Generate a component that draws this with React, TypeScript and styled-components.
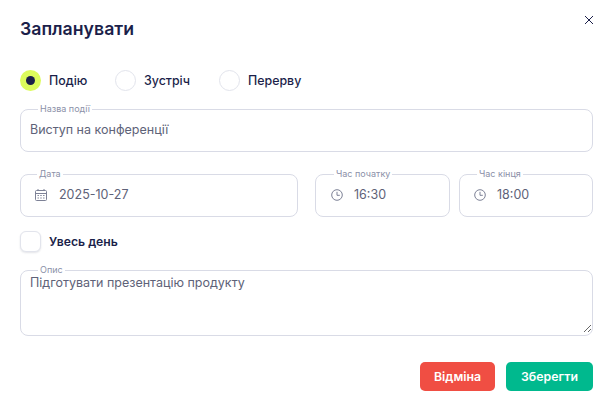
import React from "react";
import styled, { createGlobalStyle } from "styled-components";

const Global = createGlobalStyle`
  html, body { margin: 0; padding: 0; background: #fff; }
  body { font-family: Inter, "Noto Sans", sans-serif; color: #1b1f4a; }
  * { box-sizing: border-box; }
`;

const Dialog = styled.div`
  position: relative;
  width: 612px;
  height: 410px;
  padding: 19px 19px 0 20px;
  background: #fff;
`;

const Title = styled.h2`
  margin: 0;
  height: 20px;
  font-size: 17.7px;
  line-height: 20px;
  font-weight: 600;
  color: #1b1f4a;
`;

const Close = styled.button`
  position: absolute;
  top: 14px;
  right: 17px;
  width: 12px;
  height: 12px;
  padding: 0;
  border: 0;
  background: none;
  display: flex;
  color: #1b1f4a;
`;

const RadioRow = styled.div`
  display: flex;
  align-items: center;
  margin-top: 31px;
  height: 21px;
`;

const RadioItem = styled.label<{ $width: number }>`
  display: flex;
  align-items: center;
  gap: 8px;
  width: ${(p) => p.$width}px;
  font-size: 12.4px;
  font-weight: 500;
  color: #1b1f4a;
`;

const RadioCircle = styled.span<{ $checked?: boolean }>`
  width: 21px;
  height: 21px;
  border-radius: 50%;
  flex: none;
  display: flex;
  align-items: center;
  justify-content: center;
  border: ${(p) => (p.$checked ? "0" : "1px solid #e2e4ec")};
  background: ${(p) => (p.$checked ? "#dcfb5c" : "#fff")};
`;

const RadioDot = styled.span`
  width: 9px;
  height: 9px;
  border-radius: 50%;
  background: #1b1f4a;
`;

const Field = styled.fieldset<{ $height?: number; $flex?: string; $pad?: number; $gap?: number; $bottom?: number }>`
  margin: 0;
  padding: 0 9px ${(p) => p.$bottom ?? 6}px ${(p) => p.$pad ?? 9}px;
  min-width: 0;
  height: ${(p) => p.$height ?? 48}px;
  flex: ${(p) => p.$flex ?? "none"};
  border: 1px solid #d9dbe6;
  border-radius: 8px;
  display: flex;
  align-items: center;
  gap: ${(p) => p.$gap ?? 12}px;
`;

const Legend = styled.legend<{ $inset?: number }>`
  margin-left: ${(p) => p.$inset ?? 8}px;
  padding: 0 2px;
  font-size: 9px;
  line-height: 10px;
  height: 10px;
  color: #8b90a8;
  white-space: nowrap;
`;

const FieldValue = styled.span`
  font-size: 12.5px;
  line-height: 20px;
  color: #5e6278;
  white-space: nowrap;
`;

const NameBlock = styled.div`
  margin-top: 13px;
`;

const DateRow = styled.div`
  display: flex;
  margin-top: 17px;
`;

const DateSpacer = styled.div<{ $w: number }>`
  width: ${(p) => p.$w}px;
  flex: none;
`;

const CheckRow = styled.label`
  display: flex;
  align-items: center;
  gap: 8px;
  margin-top: 14px;
  height: 21px;
  font-size: 12.2px;
  font-weight: 600;
  color: #1b1f4a;
`;

const CheckBox = styled.span`
  width: 21px;
  height: 21px;
  border: 1px solid #e2e4ec;
  border-radius: 6px;
  background: #fff;
  box-shadow: 0 1px 2px rgba(28, 33, 67, 0.12);
`;

const DescField = styled(Field)`
  display: block;
  margin-top: 13px;
  padding: 0;
`;

const DescText = styled.textarea`
  display: block;
  width: 100%;
  height: 60px;
  padding: 0 9px;
  margin: -2px 0 0;
  border: 0;
  outline: 0;
  background: transparent;
  font-family: Inter, "Noto Sans", sans-serif;
  font-size: 12.5px;
  line-height: 20px;
  color: #5e6278;
  resize: vertical;
`;

const Footer = styled.div`
  display: flex;
  justify-content: flex-end;
  gap: 11px;
  margin-top: 26px;
`;

const Button = styled.button<{ $bg: string; $width: number }>`
  height: 29px;
  width: ${(p) => p.$width}px;
  padding: 0;
  border: 0;
  border-radius: 5px;
  background: ${(p) => p.$bg};
  color: #fff;
  font-family: Inter, "Noto Sans", sans-serif;
  font-size: 12.3px;
  font-weight: 600;
`;

const Svg = styled.svg`
  flex: none;
  display: block;
`;

const CalendarIcon = () => (
  <Svg width="12" height="12" viewBox="0 0 12 12" fill="none" stroke="#7d8196" strokeWidth="1">
    <rect x="0.5" y="1.5" width="11" height="10" rx="1" />
    <path d="M0.5 4.5h11M3 0v2M9 0v2" />
    <path d="M2.5 6.5h1.4M5.3 6.5h1.4M8.1 6.5h1.4M2.5 9h1.4M5.3 9h1.4M8.1 9h1.4" />
  </Svg>
);

const ClockIcon = () => (
  <Svg width="12" height="12" viewBox="0 0 12 12" fill="none" stroke="#7d8196" strokeWidth="1">
    <circle cx="6" cy="6" r="5.3" />
    <path d="M6 2.8v3.5h2.8" />
  </Svg>
);

export default function App() {
  return (
    <Dialog>
      <Global />
      <Title>Запланувати</Title>
      <Close aria-label="close">
        <Svg width="12" height="12" viewBox="0 0 12 12" fill="none" stroke="currentColor" strokeWidth="1">
          <path d="M2 2l8 8M10 2l-8 8" />
        </Svg>
      </Close>

      <RadioRow>
        <RadioItem $width={95}>
          <RadioCircle $checked>
            <RadioDot />
          </RadioCircle>
          Подію
        </RadioItem>
        <RadioItem $width={104}>
          <RadioCircle />
          Зустріч
        </RadioItem>
        <RadioItem $width={110}>
          <RadioCircle />
          Перерву
        </RadioItem>
      </RadioRow>

      <NameBlock>
        <Field>
          <Legend>Назва події</Legend>
          <FieldValue>Виступ на конференції</FieldValue>
        </Field>
      </NameBlock>

      <DateRow>
        <Field $flex="0 0 278px" $pad={14} $bottom={5}>
          <Legend $inset={2}>Дата</Legend>
          <CalendarIcon />
          <FieldValue>2025-10-27</FieldValue>
        </Field>
        <DateSpacer $w={17} />
        <Field $flex="0 0 135px" $pad={15} $gap={11} $bottom={5}>
          <Legend $inset={3}>Час початку</Legend>
          <ClockIcon />
          <FieldValue>16:30</FieldValue>
        </Field>
        <DateSpacer $w={9} />
        <Field $flex="0 0 134px" $pad={14} $gap={11} $bottom={5}>
          <Legend $inset={3}>Час кінця</Legend>
          <ClockIcon />
          <FieldValue>18:00</FieldValue>
        </Field>
      </DateRow>

      <CheckRow>
        <CheckBox />
        Увесь день
      </CheckRow>

      <DescField $height={71}>
        <Legend $inset={17}>Опис</Legend>
        <DescText defaultValue="Підготувати презентацію продукту" />
      </DescField>

      <Footer>
        <Button $bg="#f04e43" $width={75}>Відміна</Button>
        <Button $bg="#00b98e" $width={87}>Зберегти</Button>
      </Footer>
    </Dialog>
  );
}
